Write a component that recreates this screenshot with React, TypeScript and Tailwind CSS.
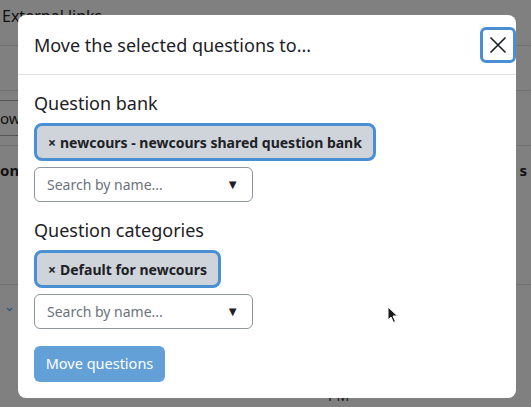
const font = { fontFamily: '"Noto Sans", "Open Sans", sans-serif' };

const Chip = ({ label }: { label: string }) => (
  <div className="inline-flex h-[38px] items-center rounded-lg border-[3px] border-[#4a8fd4] bg-[#ced4da] px-[11px] text-[14px] font-bold text-[#1d2125]">
    <span className="mr-1">×</span>
    {label}
  </div>
);

const SearchBox = () => (
  <div className="mt-[6px] flex h-[35px] w-[219px] items-center justify-between rounded-md border border-[#8f959e] pl-3 pr-[13px] text-[14px] text-[#6a737b]">
    <span>Search by name...</span>
    <span className="text-[13px] text-[#1d2125]">▼</span>
  </div>
);

const App = () => {
  return (
    <div
      className="relative h-[407px] w-[531px] overflow-hidden bg-[#808080] text-[#111]"
      style={font}
    >
      {/* page behind the backdrop */}
      <div className="flex flex-col">
        <div className="h-[46px] border-b border-[#707070] pl-[2px] pt-[4px] text-[16px]">
          External links
        </div>
        <div className="h-[45px] border-b border-[#707070]" />
        <div className="pt-[9px]">
          <div className="flex h-[36px] w-[120px] items-center border-y border-[#555] text-[15px]">
            <span>ow</span>
          </div>
        </div>
        <div className="mt-[9px] border-b border-[#707070]" />
        <div className="flex h-[138px] justify-between pt-[13px] text-[15px] font-bold">
          <span>ons</span>
          <span className="pr-[4px]">s</span>
        </div>
        <div className="border-b border-[#707070]" />
        <div className="pl-[4px] pt-[12px] text-[13px] text-[#1f4e80]">⌄</div>
        <div className="pl-[328px] pt-[68px] text-[14px] text-[#1a1a1a]">PM</div>
      </div>

      {/* modal */}
      <div className="absolute left-[18px] top-[15px] flex w-[498px] flex-col rounded-lg bg-white text-[#1d2125]">
        <div className="flex h-[60px] items-center justify-between border-b border-[#dee2e6] pl-4 pr-0">
          <h5 className="text-[18px] leading-none">Move the selected questions to...</h5>
          <button className="flex h-[36px] w-[36px] items-center justify-center rounded-md border-[3px] border-[#4a8fd4]">
            <svg width="18" height="18" viewBox="0 0 18 18">
              <path d="M1.5 1.5 L16.5 16.5 M16.5 1.5 L1.5 16.5" stroke="#1d2125" strokeWidth="1.6" fill="none" />
            </svg>
          </button>
        </div>
        <div className="flex flex-col items-start px-4 pb-4 pt-4">
          <div className="h-[32px] text-[18px] leading-[24px]">Question bank</div>
          <Chip label="newcours - newcours shared question bank" />
          <SearchBox />
          <div className="mt-[16px] h-[32px] text-[18px] leading-[24px]">Question categories</div>
          <Chip label="Default for newcours" />
          <SearchBox />
          <button className="mt-[17px] h-[36px] w-[131px] rounded-md bg-[#62a0d7] text-[14.5px] text-white">
            Move questions
          </button>
        </div>
      </div>

      {/* mouse pointer */}
      <svg className="absolute left-[387px] top-[306px]" width="12" height="18" viewBox="0 0 12 18">
        <path d="M1 1 L1 14 L4 11 L6.5 16.5 L8.5 15.5 L6 10 L10.5 10 Z" fill="#1a1a1a" stroke="#fff" strokeWidth="1" />
      </svg>
    </div>
  );
};

export default App;
